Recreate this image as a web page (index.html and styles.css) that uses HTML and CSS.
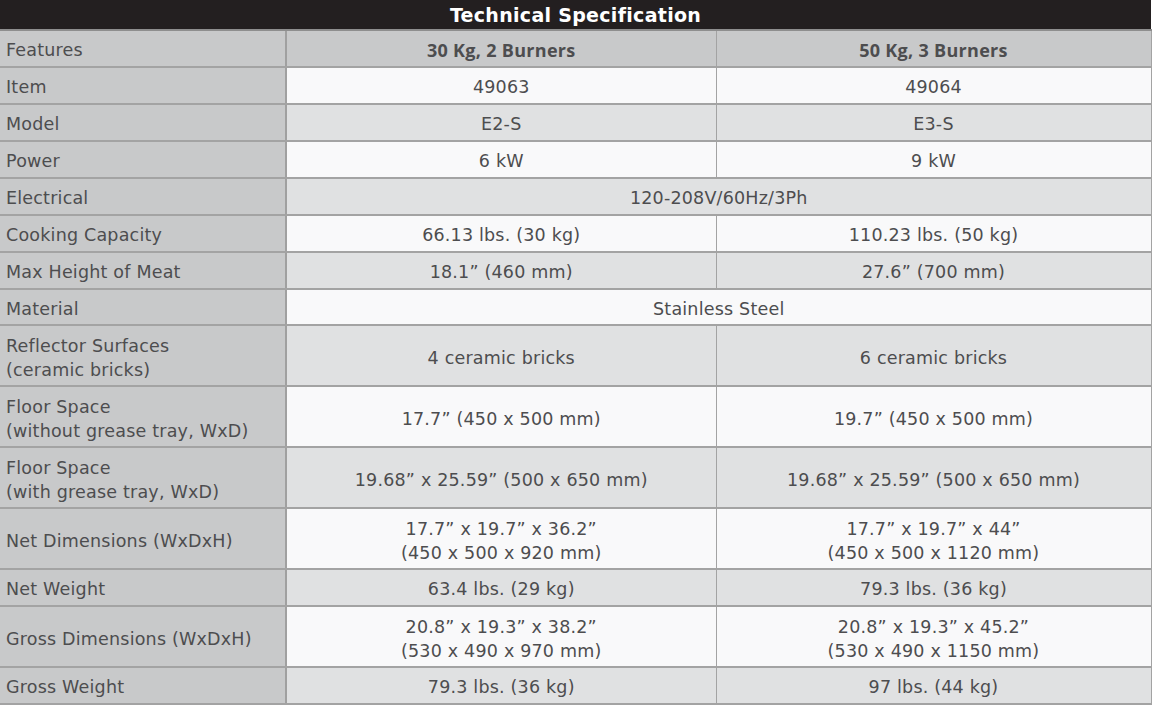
FILE: index.html
```html
<!DOCTYPE html>
<html>
<head>
<meta charset="utf-8">
<link rel="stylesheet" href="styles.css">
</head>
<body>
<table class="spec">
  <colgroup>
    <col class="c-label">
    <col class="c-a">
    <col class="c-b">
  </colgroup>
  <thead>
    <tr><th class="title" colspan="3">Technical Specification</th></tr>
  </thead>
  <tbody>
    <tr class="head"><td class="label">Features</td><td class="val strong">30 Kg, 2 Burners</td><td class="val strong">50 Kg, 3 Burners</td></tr>
    <tr class="w"><td class="label">Item</td><td class="val">49063</td><td class="val">49064</td></tr>
    <tr class="g"><td class="label">Model</td><td class="val">E2-S</td><td class="val">E3-S</td></tr>
    <tr class="w"><td class="label">Power</td><td class="val">6 kW</td><td class="val">9 kW</td></tr>
    <tr class="g"><td class="label">Electrical</td><td class="val" colspan="2">120-208V/60Hz/3Ph</td></tr>
    <tr class="w"><td class="label">Cooking Capacity</td><td class="val">66.13 lbs. (30 kg)</td><td class="val">110.23 lbs. (50 kg)</td></tr>
    <tr class="g"><td class="label">Max Height of Meat</td><td class="val">18.1” (460 mm)</td><td class="val">27.6” (700 mm)</td></tr>
    <tr class="w short"><td class="label">Material</td><td class="val" colspan="2">Stainless Steel</td></tr>
    <tr class="g tall"><td class="label">Reflector Surfaces<br>(ceramic bricks)</td><td class="val">4 ceramic bricks</td><td class="val">6 ceramic bricks</td></tr>
    <tr class="w tall"><td class="label">Floor Space<br>(without grease tray, WxD)</td><td class="val">17.7” (450 x 500 mm)</td><td class="val">19.7” (450 x 500 mm)</td></tr>
    <tr class="g tall"><td class="label">Floor Space<br>(with grease tray, WxD)</td><td class="val">19.68” x 25.59” (500 x 650 mm)</td><td class="val">19.68” x 25.59” (500 x 650 mm)</td></tr>
    <tr class="w tall"><td class="label">Net Dimensions (WxDxH)</td><td class="val">17.7” x 19.7” x 36.2”<br>(450 x 500 x 920 mm)</td><td class="val">17.7” x 19.7” x 44”<br>(450 x 500 x 1120 mm)</td></tr>
    <tr class="g"><td class="label">Net Weight</td><td class="val">63.4 lbs. (29 kg)</td><td class="val">79.3 lbs. (36 kg)</td></tr>
    <tr class="w tall"><td class="label">Gross Dimensions (WxDxH)</td><td class="val">20.8” x 19.3” x 38.2”<br>(530 x 490 x 970 mm)</td><td class="val">20.8” x 19.3” x 45.2”<br>(530 x 490 x 1150 mm)</td></tr>
    <tr class="g"><td class="label">Gross Weight</td><td class="val">79.3 lbs. (36 kg)</td><td class="val">97 lbs. (44 kg)</td></tr>
  </tbody>
</table>
</body>
</html>
```
FILE: styles.css
```css
html, body {
  margin: 0;
  padding: 0;
  background: #ffffff;
}
.spec {
  width: 1151px;
  border-collapse: collapse;
  table-layout: fixed;
  font-family: "DejaVu Sans", "Open Sans", sans-serif;
  font-size: 17.5px;
  letter-spacing: 0.2px;
  color: #4d4d4f;
}
.c-label { width: 286px; }
.c-a { width: 430px; }
.c-b { width: 435px; }
.spec th.title {
  background: #231f20;
  color: #ffffff;
  font-weight: 700;
  font-size: 19px;
  letter-spacing: 0.3px;
  height: 29px;
  padding: 0;
  text-align: center;
  border-bottom: 2px solid #8e8e8e;
}
.spec td {
  border: 1px solid #a3a3a3;
  border-width: 1px 1px 2px 1px;
  padding: 3px 0 0 0;
  height: 32px;
  line-height: 24px;
  vertical-align: middle;
}
.spec td.label {
  background: #c8c9ca;
  padding-left: 6px;
  text-align: left;
  border-left: 0;
  border-right: 2px solid #a0a0a0;
}
.spec td.val {
  text-align: center;
}
.spec td.strong {
  font-family: "Open Sans", "DejaVu Sans", sans-serif;
  font-weight: 700;
  font-size: 18px;
  letter-spacing: 0.3px;
}
.spec tr.short td {
  height: 31px;
}
.spec tr.tall td {
  height: 55px;
  padding-top: 4px;
}
.spec tr.head td {
  background: #c8c9ca;
}
.spec tr.w td.val {
  background: #f9f9fa;
}
.spec tr.g td.val {
  background: #e0e1e2;
}
```
